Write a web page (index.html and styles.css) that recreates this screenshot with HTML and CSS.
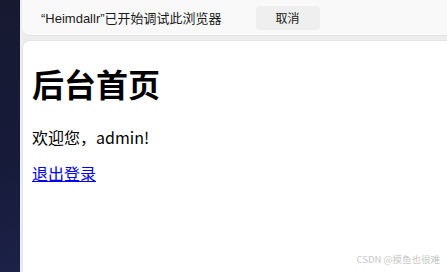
FILE: index.html
```html
<!DOCTYPE html>
<html lang="zh-CN">
<head>
    <meta charset="UTF-8">
    <meta name="viewport" content="width=device-width, initial-scale=1.0">
    <title>后台首页</title>
    <link rel="stylesheet" href="styles.css">
</head>
<body>
    <div class="desktop">
        <div class="sidebar"></div>
        <div class="window">
            <div class="debug-bar">
                <span class="debug-text">“Heimdallr”已开始调试此浏览器</span>
                <button class="cancel-btn">取消</button>
            </div>
            <div class="page">
                <h1>后台首页</h1>
                <p>欢迎您，admin!</p>
                <a href="#">退出登录</a>
            </div>
        </div>
    </div>
    <div class="watermark">CSDN @摸鱼也很难</div>
</body>
</html>
```

FILE: styles.css
```css
html, body {
    margin: 0;
    height: 100%;
    overflow: hidden;
}
body {
    font-family: "Liberation Sans", "Noto Sans CJK SC", sans-serif;
    background-color: #ececec;
}
.desktop {
    display: flex;
    height: 100%;
}
.sidebar {
    width: 20px;
    flex-shrink: 0;
    background: linear-gradient(160deg, #161930 0%, #171b3a 60%, #1c2148 100%);
}
.window {
    flex: 1;
    display: flex;
    flex-direction: column;
    gap: 4px;
    padding-left: 2px;
    background-color: #ededed;
}
.debug-bar {
    height: 36px;
    flex-shrink: 0;
    display: flex;
    align-items: center;
    padding-left: 19px;
    background-color: #f9f9f9;
    border-bottom: 1px solid #e2e2e2;
    border-bottom-left-radius: 8px;
    box-sizing: border-box;
}
.debug-text {
    font-size: 13px;
    color: #1a1a1a;
}
.cancel-btn {
    margin-left: 34px;
    width: 64px;
    height: 24px;
    border: none;
    border-radius: 4px;
    background-color: #efefef;
    font-family: "Noto Sans CJK SC", sans-serif;
    font-size: 12px;
    color: #1a1a1a;
}
.page {
    flex: 1;
    background: white;
    border-top-left-radius: 8px;
    border-top: 1px solid #e4e4e4;
    border-left: 1px solid #e4e4e4;
    padding: 8px 8px 8px 9px;
    font-family: "Microsoft YaHei", "Noto Sans CJK SC", sans-serif;
}
h1 {
    font-size: 32px;
    margin: 11px 0 19px;
}
p {
    font-size: 16px;
    margin: 0 0 12px;
}
a {
    color: #0000ee;
    font-size: 16px;
}
.watermark {
    position: absolute;
    right: 7px;
    bottom: 6px;
    font-size: 9.5px;
    color: #c8c8c8;
    font-family: "Noto Sans CJK SC", sans-serif;
}
```
